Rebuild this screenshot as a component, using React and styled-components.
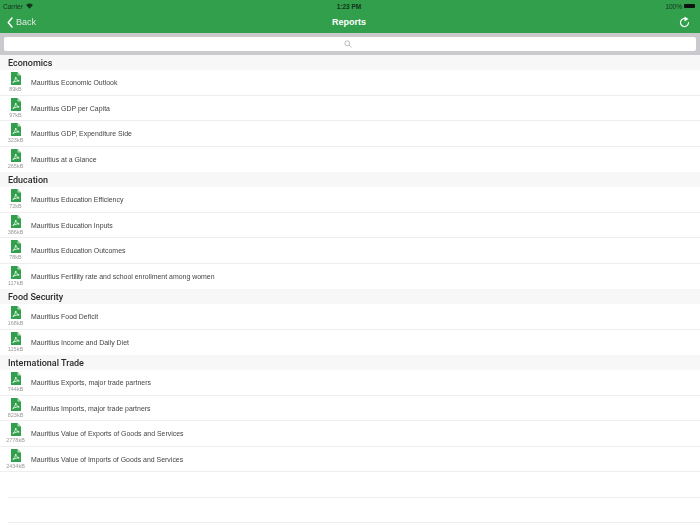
import React from 'react';
import styled, { createGlobalStyle } from 'styled-components';

const sections = [
  {
    title: 'Economics',
    reports: [
      ['Mauritius Economic Outlook', '89kB'],
      ['Mauritius GDP per Capita', '97kB'],
      ['Mauritius GDP, Expenditure Side', '323kB'],
      ['Mauritius at a Glance', '265kB'],
    ],
  },
  {
    title: 'Education',
    reports: [
      ['Mauritius Education Efficiency', '72kB'],
      ['Mauritius Education Inputs', '386kB'],
      ['Mauritius Education Outcomes', '78kB'],
      ['Mauritius Fertility rate and school enrollment among women', '117kB'],
    ],
  },
  {
    title: 'Food Security',
    reports: [
      ['Mauritius Food Deficit', '168kB'],
      ['Mauritius Income and Daily Diet', '115kB'],
    ],
  },
  {
    title: 'International Trade',
    reports: [
      ['Mauritius Exports, major trade partners', '744kB'],
      ['Mauritius Imports, major trade partners', '823kB'],
      ['Mauritius Value of Exports of Goods and Services', '2778kB'],
      ['Mauritius Value of Imports of Goods and Services', '2434kB'],
    ],
  },
];

const GlobalStyle = createGlobalStyle`
  html, body {
    margin: 0;
    padding: 0;
    background: #fff;
  }
  body {
    font-family: "Liberation Sans", Arial, sans-serif;
  }
`;

const Page = styled.div`
  width: 700px;
  height: 525px;
  overflow: hidden;
  background: #fff;
`;

const Header = styled.header`
  height: 33px;
  background: #319f4b;
  color: #fff;
  display: flex;
  flex-direction: column;
`;

const StatusBar = styled.div`
  height: 10px;
  padding: 1px 5px 0 3px;
  display: grid;
  grid-template-columns: 1fr auto 1fr;
  align-items: center;
  font-size: 6.5px;
  color: #14351c;
`;

const StatusLeft = styled.div`
  display: flex;
  align-items: center;
  gap: 3px;
`;

const StatusRight = styled.div`
  display: flex;
  align-items: center;
  justify-content: flex-end;
  gap: 2px;
`;

const Clock = styled.div`
  font-weight: bold;
`;

const Battery = styled.span`
  width: 11px;
  height: 4px;
  background: #111;
  border-radius: 1px;
`;

const NavBar = styled.div`
  flex: 1;
  padding: 0 10px 0 7px;
  display: grid;
  grid-template-columns: 1fr auto 1fr;
  align-items: center;
`;

const BackLink = styled.div`
  display: flex;
  align-items: center;
  gap: 3px;
  font-size: 9px;
  color: #d6eddc;
  filter: grayscale(0.6);
`;

const Title = styled.div`
  font-size: 9px;
  font-weight: bold;
  padding-left: 1px;
`;

const RefreshWrap = styled.div`
  display: flex;
  justify-content: flex-end;
`;

const SearchBar = styled.div`
  height: 22px;
  padding: 4px;
  box-sizing: border-box;
  background: #c9c9ce;
`;

const SearchField = styled.div`
  height: 14px;
  padding-right: 4px;
  background: #fff;
  border-radius: 2px;
  display: flex;
  align-items: center;
  justify-content: center;
`;

const SectionTitle = styled.div`
  height: 15px;
  padding-left: 8px;
  background: #f7f7f7;
  font-family: Roboto, "Liberation Sans", sans-serif;
  font-size: 9px;
  font-weight: 500;
  line-height: 16px;
  color: #2a2a2a;
  filter: grayscale(1);
`;

const Row = styled.div`
  height: 25.5px;
  box-sizing: border-box;
  margin-left: ${(props) => (props.$inset ? '8px' : '0')};
  padding-left: 8px;
  border-bottom: 1px solid #eeeeee;
  display: flex;
  align-items: center;

  section:not(:last-of-type) > &:last-child {
    border-bottom: none;
  }
`;

const FileCell = styled.div`
  width: 15px;
  margin-right: 8px;
  display: flex;
  flex-direction: column;
  align-items: center;
`;

const FileSize = styled.div`
  font-size: 5.5px;
  line-height: 6px;
  margin-top: 1px;
  white-space: nowrap;
  color: #999;
  filter: grayscale(1);
`;

const ReportName = styled.div`
  font-size: 6.95px;
  padding-top: 1px;
  color: #444;
  filter: grayscale(1);
`;

const BackChevron = () => (
  <svg width="6" height="11" viewBox="0 0 12 22" fill="none">
    <path d="M10 2 2.500 11l7.500 9" stroke="#fff" strokeWidth="3" strokeLinecap="round" strokeLinejoin="round" />
  </svg>
);

const WifiIcon = () => (
  <svg width="7" height="6" viewBox="0 0 14 11">
    <path d="M7 11 0 3.500C4-.8 10-.8 14 3.500Z" fill="#14351c" />
  </svg>
);

const RefreshIcon = () => (
  <svg width="11" height="12" viewBox="0 0 22 24" fill="none">
    <path d="M15 6.200A8 8 0 1 0 19 13" stroke="#fff" strokeWidth="2.400" strokeLinecap="round" />
    <path d="M11 1l8 5-8 5Z" fill="#fff" />
  </svg>
);

const SearchIcon = () => (
  <svg width="8" height="8" viewBox="0 0 16 16" fill="none" stroke="#a8a8a8" strokeWidth="1.500">
    <circle cx="6.500" cy="6.500" r="4.800" />
    <path d="M10 10l5 5" />
  </svg>
);

const PdfIcon = () => (
  <svg width="10" height="13" viewBox="0 0 20 26">
    <path d="M0 0h13l7 7v19H0Z" fill="#319f4b" />
    <path d="M13 0l7 7h-7Z" fill="#a9d8b4" />
    <path
      d="M3.500 21c3-1.500 5-5.500 6-11 1 4.500 3 7 7 8-4-.5-8 .5-13 3Z"
      fill="none"
      stroke="#fff"
      strokeWidth="1.600"
    />
  </svg>
);

const App = () => {
  return (
    <Page>
      <GlobalStyle />
      <Header>
        <StatusBar>
          <StatusLeft>
            Carrier
            <WifiIcon />
          </StatusLeft>
          <Clock>1:23 PM</Clock>
          <StatusRight>
            100%
            <Battery />
          </StatusRight>
        </StatusBar>
        <NavBar>
          <BackLink>
            <BackChevron />
            Back
          </BackLink>
          <Title>Reports</Title>
          <RefreshWrap>
            <RefreshIcon />
          </RefreshWrap>
        </NavBar>
      </Header>
      <SearchBar>
        <SearchField>
          <SearchIcon />
        </SearchField>
      </SearchBar>
      {sections.map((section) => (
        <section key={section.title}>
          <SectionTitle>{section.title}</SectionTitle>
          {section.reports.map(([name, size]) => (
            <Row key={name}>
              <FileCell>
                <PdfIcon />
                <FileSize>{size}</FileSize>
              </FileCell>
              <ReportName>{name}</ReportName>
            </Row>
          ))}
        </section>
      ))}
      <Row $inset />
      <Row $inset />
    </Page>
  );
};

export default App;
